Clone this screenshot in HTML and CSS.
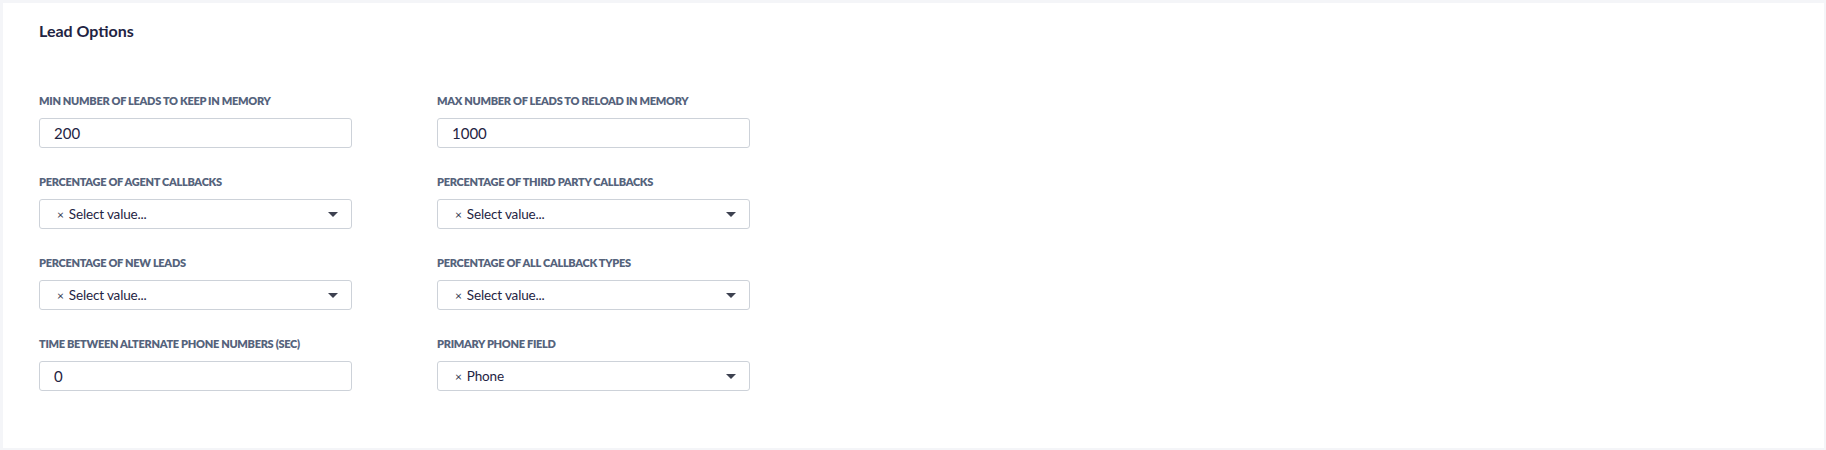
FILE: index.html
```html
<!DOCTYPE html>
<html>
<head>
<meta charset="utf-8">
<link rel="stylesheet" href="styles.css">
</head>
<body>
<div class="card">
  <h2 class="title">Lead Options</h2>
  <div class="grid">
    <div class="field">
      <label class="label">Min number of leads to keep in memory</label>
      <div class="input">200</div>
    </div>
    <div class="field">
      <label class="label">Max number of leads to reload in memory</label>
      <div class="input">1000</div>
    </div>
    <div class="field">
      <label class="label">Percentage of agent callbacks</label>
      <div class="select"><span class="clear">×</span><span class="value">Select value...</span><span class="arrow"></span></div>
    </div>
    <div class="field">
      <label class="label">Percentage of third party callbacks</label>
      <div class="select"><span class="clear">×</span><span class="value">Select value...</span><span class="arrow"></span></div>
    </div>
    <div class="field">
      <label class="label">Percentage of new leads</label>
      <div class="select"><span class="clear">×</span><span class="value">Select value...</span><span class="arrow"></span></div>
    </div>
    <div class="field">
      <label class="label">Percentage of all callback types</label>
      <div class="select"><span class="clear">×</span><span class="value">Select value...</span><span class="arrow"></span></div>
    </div>
    <div class="field">
      <label class="label">Time between alternate phone numbers (sec)</label>
      <div class="input">0</div>
    </div>
    <div class="field">
      <label class="label">Primary phone field</label>
      <div class="select"><span class="clear">×</span><span class="value">Phone</span><span class="arrow"></span></div>
    </div>
  </div>
</div>
</body>
</html>
```
FILE: styles.css
```css
* { box-sizing: border-box; }
html, body { margin: 0; padding: 0; }
body {
  background: #f4f5f8;
  font-family: Lato, "Liberation Sans", sans-serif;
  padding: 3px 2px 2px 3px;
  height: 450px;
}
.card {
  background: #ffffff;
  height: 445px;
  padding: 18px 36px 0 36px;
}
.title {
  margin: 0;
  font-size: 16px;
  line-height: 20px;
  font-weight: 700;
  color: #1f2443;
}
.grid {
  margin-top: 53px;
  display: grid;
  grid-template-columns: 313px 313px;
  column-gap: 85px;
  row-gap: 27px;
}
.field { display: flex; flex-direction: column; }
.label {
  font-size: 11px;
  line-height: 14px;
  font-weight: 800;
  text-transform: uppercase;
  color: #55637c;
  margin-bottom: 10px;
  letter-spacing: -0.3px;
}
.input, .select {
  height: 30px;
  border: 1px solid #cdd2d9;
  border-radius: 3px;
  display: flex;
  align-items: center;
  font-size: 15px;
  color: #1f2443;
}
.input { padding-left: 14px; }
.select { padding: 0 12px 0 14px; font-size: 13.5px; letter-spacing: -0.15px; }
.clear { font-size: 12px; color: #333a50; margin-right: 5px; margin-left: 3px; }
.value { flex: 1; }
.arrow {
  width: 0; height: 0;
  border-left: 5px solid transparent;
  border-right: 5px solid transparent;
  border-top: 5px solid #3d4150;
  margin-right: 1px;
}
```
